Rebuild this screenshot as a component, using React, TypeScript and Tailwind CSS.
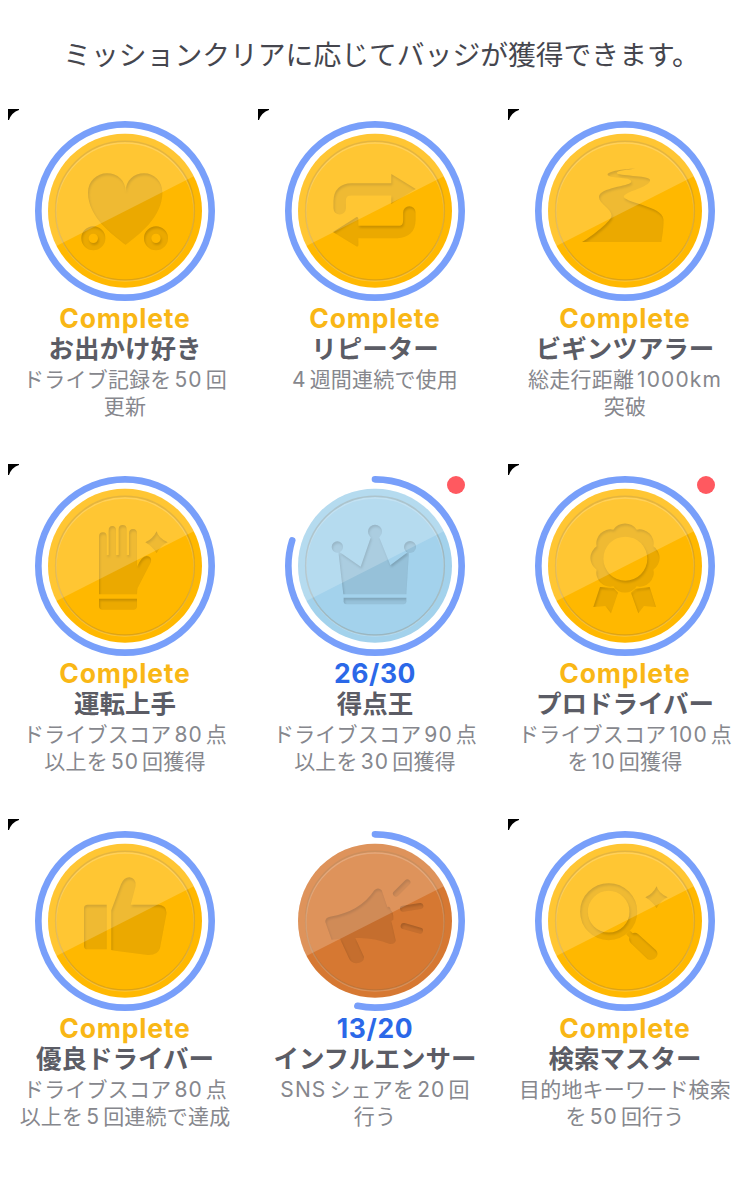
import type { ReactNode } from 'react';

type Tone = 'gold' | 'silver' | 'bronze';

interface Mission {
  title: string;
  lines: string[];
  icon: ReactNode;
  tone: Tone;
  count?: string;
  progress: number;
  isNew?: boolean;
}

const COIN_COLORS: Record<Tone, string> = {
  gold: '#ffb800',
  silver: '#a3d2ec',
  bronze: '#d67832',
};

const SPARKLE = 'M470 228 Q474 248 503 261 Q482 270 470 293 Q458 274 436 261 Q458 252 470 228Z';

const HeartIcon = (
  <>
    <path d="M377 433 C340 405 264 350 264 277 C264 243 290 219 321 219 C352 219 377 240 377 274 C377 240 402 219 432 219 C463 219 487 243 487 277 C487 350 415 405 377 433Z" />
    <circle cx="280" cy="414" r="25" fill="none" stroke="#000" strokeWidth="22" />
    <circle cx="468" cy="414" r="25" fill="none" stroke="#000" strokeWidth="22" />
  </>
);

const RepeatIcon = (
  <>
    <path d="M269 324 V303 Q269 267 305 267 H426" fill="none" stroke="#000" strokeWidth="37" strokeLinecap="round" />
    <path d="M424 221 L497 266 L424 311Z" />
    <path d="M478 336 V359 Q478 395 442 395 H323" fill="none" stroke="#000" strokeWidth="37" strokeLinecap="round" />
    <path d="M320 350 Q325 350 325 356 V434 Q325 440 319 438 L249 395Z" />
  </>
);

const RoadIcon = (
  <path d="M406 205 C370 205 325 213 323 222 C320 236 402 228 393 246 C387 258 300 262 297 289 C296 310 335 325 335 346 C335 360 280 405 246 425 H484 C486 410 492 380 490 355 C485 318 385 310 371 290 C372 272 452 262 450 238 C445 224 352 228 350 217 C352 210 385 208 406 205Z" />
);

const GloveIcon = (
  <>
    <path d="M297 417 V244 Q297 231 309 231 Q320 231 320 244 V299 H326 V226 Q326 212 337 212 Q348 212 348 226 V299 H356 V222 Q356 209 368 209 Q380 209 380 222 V299 H387 V235 Q387 221 399 221 Q411 221 411 235 V334 Q425 303 440 302 Q456 304 453 320 L413 398 Q411 403 411 417Z" />
    <path d="M297 430 H411 V452 Q411 463 400 463 H308 Q297 463 297 452Z" />
    <path d={SPARKLE} />
  </>
);

const CrownIcon = (
  <>
    <circle cx="262" cy="275" r="17" />
    <circle cx="375" cy="229" r="21" />
    <circle cx="480" cy="275" r="18" />
    <path d="M265 288 L332 334 L363 244 H387 L421 330 L477 288 L469 417 H280Z" />
    <path d="M281 427 H469 V438 Q469 447 460 447 H290 Q281 447 281 438Z" />
  </>
);

const RosetteIcon = (
  <>
    <path
      fillRule="evenodd"
      d="M340 223 A42 42 0 0 1 410 223 A42 42 0 0 1 460 273 A42 42 0 0 1 460 343 A42 42 0 0 1 410 393 A42 42 0 0 1 340 393 A42 42 0 0 1 290 343 A42 42 0 0 1 290 273 A42 42 0 0 1 340 223Z M442 310 A66 66 0 1 0 310 310 A66 66 0 1 0 442 310Z"
    />
    <path d="M300 395 L342 398 L354 412 L333 474 L316 452 L280 455Z" />
    <path d="M449 395 L406 400 L393 412 L415 474 L432 452 L468 455Z" />
  </>
);

const ThumbIcon = (
  <>
    <path d="M263 283 H320 V417 H263 Q252 417 252 406 V294 Q252 283 263 283Z" />
    <path d="M334 419 V300 L363 222 Q372 201 388 201 Q410 204 406 230 L392 283 H475 Q502 285 499 312 L480 413 Q474 435 444 434 L345 421Z" />
  </>
);

const MegaphoneIcon = (
  <>
    <path d="M226 335 Q225 322 240 319 Q330 305 373 240 Q384 229 395 240 L412 290 Q421 287 422 300 Q431 306 430 328 L424 332 L437 390 Q436 402 420 401 Q370 380 316 383 L342 440 Q342 457 318 459 Q303 456 298 446 L270 385 L245 388Z" />
    <path d="M438 250 L472 216 M459 295 L511 287 M461 347 L510 361" fill="none" stroke="#000" strokeWidth="18" strokeLinecap="round" />
  </>
);

const SearchIcon = (
  <>
    <circle cx="326" cy="304" r="74" fill="none" stroke="#000" strokeWidth="23" />
    <path d="M384 366 L394 376" stroke="#000" strokeWidth="16" />
    <path d="M388 382 Q387 375 395 370 Q406 364 414 371 L468 420 Q476 430 469 440 Q458 454 443 447 L392 398 Q386 391 388 382Z" />
    <path d={SPARKLE} />
  </>
);

const MISSIONS: Mission[] = [
  { title: 'お出かけ好き', lines: ['ドライブ記録を50回', '更新'], icon: HeartIcon, tone: 'gold', progress: 1 },
  { title: 'リピーター', lines: ['4週間連続で使用'], icon: RepeatIcon, tone: 'gold', progress: 1 },
  { title: 'ビギンツアラー', lines: ['総走行距離1000km', '突破'], icon: RoadIcon, tone: 'gold', progress: 1 },
  { title: '運転上手', lines: ['ドライブスコア80点', '以上を50回獲得'], icon: GloveIcon, tone: 'gold', progress: 1 },
  { title: '得点王', lines: ['ドライブスコア90点', '以上を30回獲得'], icon: CrownIcon, tone: 'silver', count: '26/30', progress: 0.797, isNew: true },
  { title: 'プロドライバー', lines: ['ドライブスコア100点', 'を10回獲得'], icon: RosetteIcon, tone: 'gold', progress: 1, isNew: true },
  { title: '優良ドライバー', lines: ['ドライブスコア80点', '以上を5回連続で達成'], icon: ThumbIcon, tone: 'gold', progress: 1 },
  { title: 'インフルエンサー', lines: ['SNSシェアを20回', '行う'], icon: MegaphoneIcon, tone: 'bronze', count: '13/20', progress: 0.532 },
  { title: '検索マスター', lines: ['目的地キーワード検索', 'を50回行う'], icon: SearchIcon, tone: 'gold', progress: 1 },
];

function Coin({ mission }: { mission: Mission }) {
  const done = mission.progress >= 1;
  return (
    <svg className="block size-[180px]" viewBox="105 62 540 540">
      {/* Progress ring */}
      <circle
        cx="375"
        cy="332"
        r="260"
        fill="none"
        stroke="#789ffa"
        strokeWidth="20"
        strokeLinecap={done ? 'butt' : 'round'}
        pathLength={done ? undefined : 1}
        strokeDasharray={done ? undefined : `${mission.progress} 1`}
        transform="rotate(-90 375 332)"
      />
      <circle cx="375" cy="331" r="231" fill={COIN_COLORS[mission.tone]} />
      {/* Groove */}
      <circle cx="375" cy="335" r="207" fill="none" stroke="#fff" strokeOpacity="0.2" strokeWidth="4" />
      <circle cx="375" cy="331" r="208" fill="none" stroke="#7a6440" strokeOpacity="0.25" strokeWidth="4.5" />
      <g filter="url(#deboss)">{mission.icon}</g>
      {/* Sheen */}
      <path d="M169 437 L583 227 A231 231 0 1 0 169 437Z" fill="#fff" fillOpacity="0.2" />
    </svg>
  );
}

function Description({ text }: { text: string }) {
  const parts = text.split(/([0-9A-Za-z]+)/).filter(Boolean);
  return (
    <span className="block whitespace-nowrap">
      {parts.map((part, i) =>
        /^[0-9A-Za-z]/.test(part) ? (
          <span key={i} className="mx-[3px] tracking-[1.1px] first:ml-0 last:mr-0">{part}</span>
        ) : (
          <span key={i}>{part}</span>
        )
      )}
    </span>
  );
}

function MissionCard({ mission }: { mission: Mission }) {
  return (
    <div className="relative flex h-[355px] flex-col items-center pt-[21px] text-center">
      {!mission.count && (
        <svg className="absolute left-2 top-[9px] size-[11px]" viewBox="0 0 11 11">
          <path d="M0 0 H11 V1 Q3.5 3.5 1 11 H0Z" fill="#000" />
        </svg>
      )}
      <Coin mission={mission} />
      {mission.isNew && (
        <span className="absolute left-[197px] top-[21px] size-[18px] rounded-full bg-[#ff5960]"></span>
      )}
      <p
        className={
          mission.count
            ? 'mt-px text-[26.5px] leading-8 font-bold tracking-[0.6px] text-[#2b68e8]'
            : 'mt-px text-[26.5px] leading-8 font-bold tracking-[0.8px] text-[#f9b716]'
        }
      >
        {mission.count ?? 'Complete'}
      </p>
      <h2 className="text-[25.5px] leading-[30px] font-bold whitespace-nowrap text-[#5b5c65]">{mission.title}</h2>
      <p className="mt-0.5 text-[21px] leading-[27px] tracking-[0.2px] text-[#86878d]">
        {mission.lines.map((line) => (
          <Description key={line} text={line} />
        ))}
      </p>
    </div>
  );
}

export default function App() {
  return (
    <main lang="ja" className="h-[1200px] w-[750px] overflow-hidden bg-white font-['Inter','Noto_Sans_CJK_JP',sans-serif]">
      <svg className="absolute size-0">
        <defs>
          <filter id="deboss" x="-10%" y="-10%" width="120%" height="120%" colorInterpolationFilters="sRGB">
            <feFlood floodColor="#000" floodOpacity="0.08" result="tint" />
            <feComposite in="tint" in2="SourceAlpha" operator="in" result="base" />
            <feOffset in="SourceAlpha" dx="2" dy="5" result="moved" />
            <feGaussianBlur in="moved" stdDeviation="3" result="soft" />
            <feComposite in="SourceAlpha" in2="soft" operator="out" result="edge" />
            <feColorMatrix in="edge" type="matrix" values="0 0 0 0 0  0 0 0 0 0  0 0 0 0 0  0 0 0 0.15 0" result="shade" />
            <feMerge>
              <feMergeNode in="base" />
              <feMergeNode in="shade" />
            </feMerge>
          </filter>
        </defs>
      </svg>

      <h1 className="flex h-[100px] items-center justify-center pt-3 pl-[13px] text-[27.8px] whitespace-nowrap text-[#45464e]">
        ミッションクリアに応じてバッジが獲得できます。
      </h1>

      <section className="grid grid-cols-3">
        {MISSIONS.map((mission) => (
          <MissionCard key={mission.title} mission={mission} />
        ))}
      </section>
    </main>
  );
}
